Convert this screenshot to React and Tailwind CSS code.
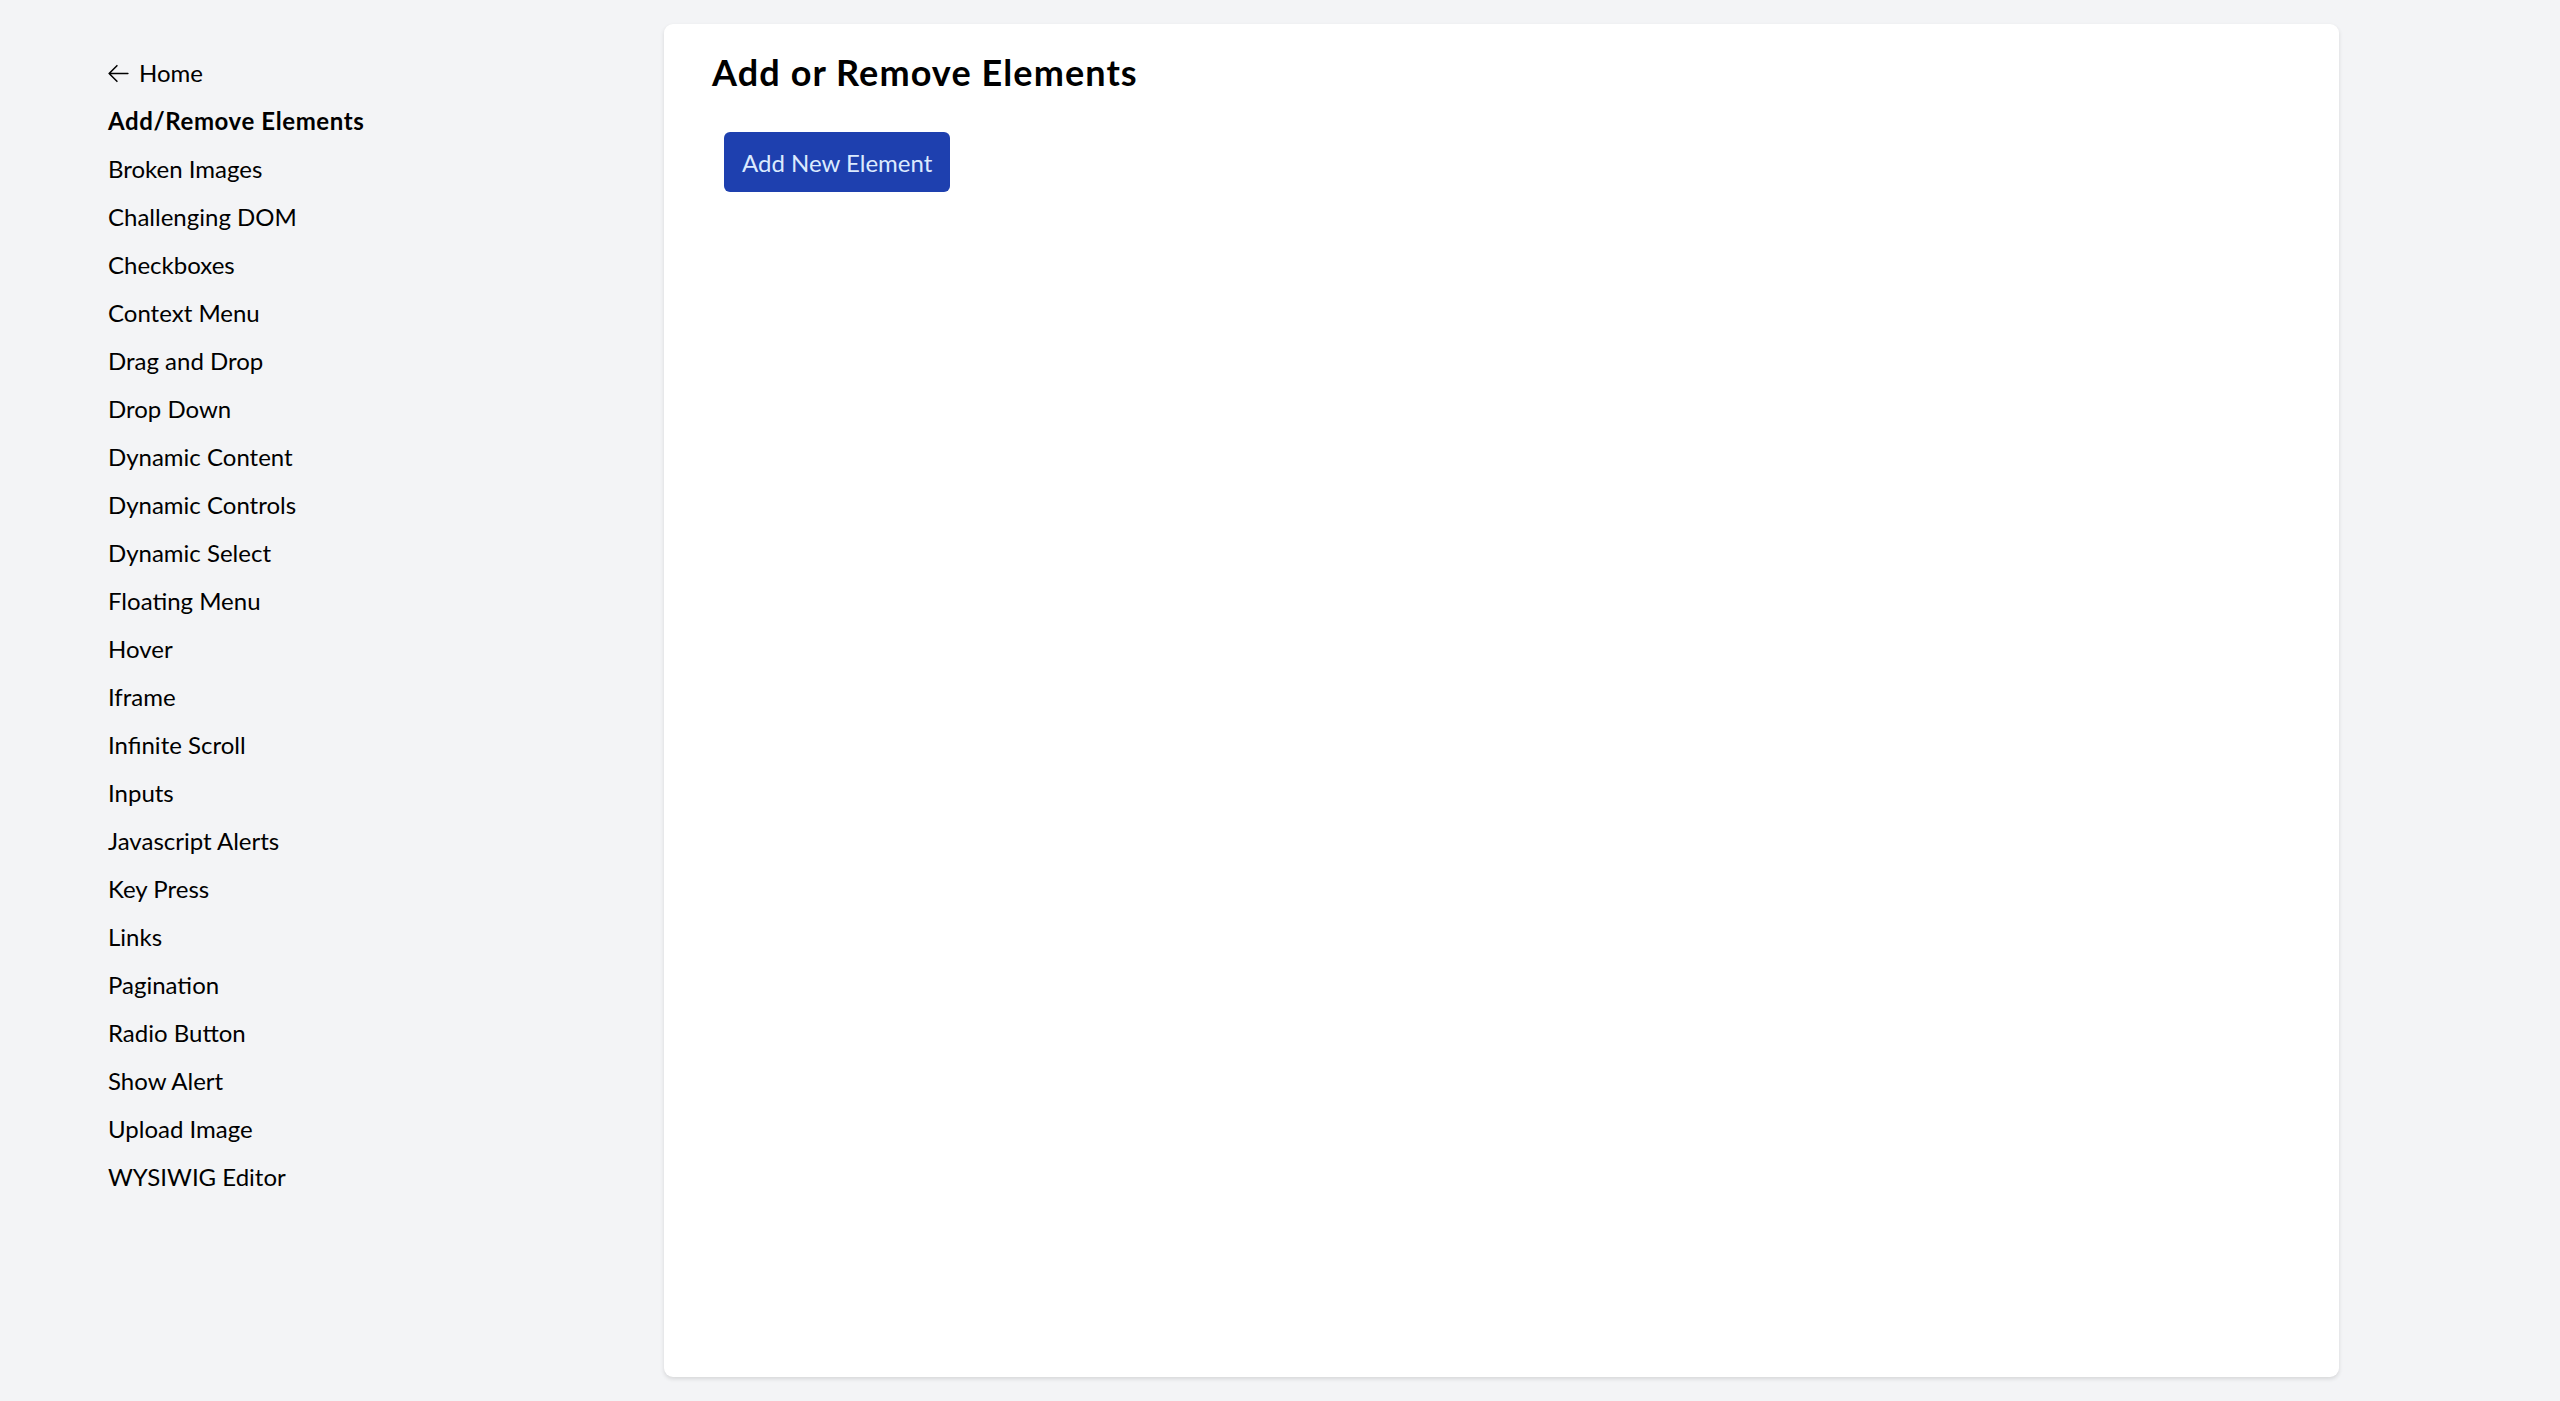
import React from "react";

const links = [
  "Broken Images",
  "Challenging DOM",
  "Checkboxes",
  "Context Menu",
  "Drag and Drop",
  "Drop Down",
  "Dynamic Content",
  "Dynamic Controls",
  "Dynamic Select",
  "Floating Menu",
  "Hover",
  "Iframe",
  "Infinite Scroll",
  "Inputs",
  "Javascript Alerts",
  "Key Press",
  "Links",
  "Pagination",
  "Radio Button",
  "Show Alert",
  "Upload Image",
  "WYSIWIG Editor",
];

export default function App() {
  return (
    <div
      className="flex min-h-screen bg-[#f3f4f6] py-[24px] text-black"
      style={{ fontFamily: "Lato, 'Open Sans', sans-serif" }}
    >
      <aside className="w-[664px] shrink-0 pl-[108px] pt-[31px]">
        <nav className="flex flex-col gap-[12px]">
          <a className="flex h-[36px] items-center gap-[8px] text-[24px] leading-[36px] -ml-[2px]">
            <svg
              width="25"
              height="25"
              viewBox="0 0 24 24"
              fill="none"
              stroke="currentColor"
              strokeWidth="1.5"
              strokeLinecap="round"
              strokeLinejoin="round"
            >
              <path d="M10.5 19.5 3 12m0 0 7.5-7.5M3 12h18" />
            </svg>
            <span>Home</span>
          </a>
          <a className="text-[24px] font-bold leading-[36px] tracking-[0.6px]">Add/Remove Elements</a>
          {links.map((l) => (
            <a key={l} className="text-[24px] leading-[36px]">
              {l}
            </a>
          ))}
        </nav>
      </aside>
      <main className="flex w-[1675px] shrink-0 flex-col items-start rounded-[9px] bg-white pl-[48px] pt-[24px] shadow-[0_2px_4px_rgba(0,0,0,0.12)]">
        <h1 className="text-[36px] font-bold leading-[48px] tracking-[1.1px]">Add or Remove Elements</h1>
        <button className="ml-[12px] mt-[36px] rounded-[6px] bg-[#1e40af] px-[18px] pb-[11px] pt-[13px] text-[24px] leading-[36px] text-[#dbeafe]">
          Add New Element
        </button>
      </main>
    </div>
  );
}
